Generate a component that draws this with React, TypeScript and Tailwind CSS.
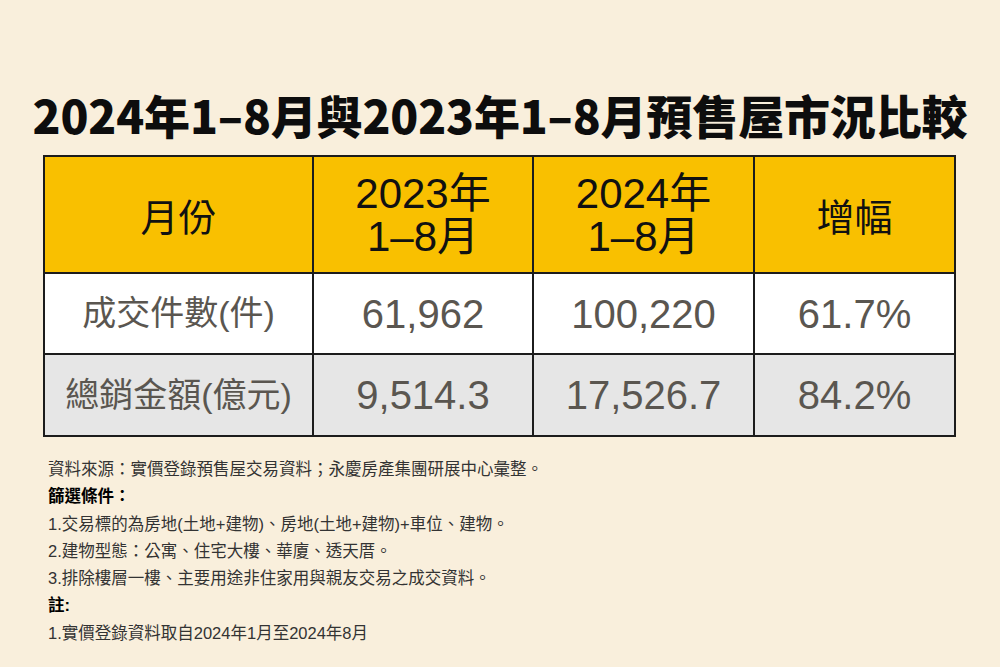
import React from "react";

const cjk = { fontFamily: '"Liberation Sans", "Noto Sans CJK TC", sans-serif' };
const cjkOnly = { fontFamily: '"Noto Sans CJK TC", sans-serif' };

function Cell({ children, className = "" }: { children: React.ReactNode; className?: string }) {
  return (
    <div className={`flex items-center justify-center border-r-2 border-b-2 border-[#1c1c1c] text-center ${className}`}>
      {children}
    </div>
  );
}

export default function App() {
  return (
    <div className="w-[1000px] h-[667px] bg-[#f9efdc] flex flex-col items-center overflow-hidden" style={cjk}>
      <h1
        className="mt-[91px] h-[46px] leading-[46px] text-[46px] font-black text-[#0d0d0d] whitespace-nowrap tracking-[-0.15px]"
        style={cjkOnly}
      >
        2024年1–8月與2023年1–8月預售屋市況比較
      </h1>
      <div className="mt-[18px] grid grid-cols-[269px_220px_221px_201px] border-l-2 border-t-2 border-[#1c1c1c] ml-[-1px]">
        <Cell className="h-[117px] bg-[#f9c000] text-[#111] text-[38px]">
          <span style={cjkOnly}>月份</span>
        </Cell>
        <Cell className="h-[117px] bg-[#f9c000] text-[#111] text-[42px] leading-[43px]">
          <span>2023年<br />1–8月</span>
        </Cell>
        <Cell className="h-[117px] bg-[#f9c000] text-[#111] text-[42px] leading-[43px]">
          <span>2024年<br />1–8月</span>
        </Cell>
        <Cell className="h-[117px] bg-[#f9c000] text-[#111] text-[38px]">
          <span style={cjkOnly}>增幅</span>
        </Cell>

        <Cell className="h-[81px] bg-white text-[#5a5650] text-[34px]">成交件數(件)</Cell>
        <Cell className="h-[81px] bg-white text-[#5a5650] text-[40px]">61,962</Cell>
        <Cell className="h-[81px] bg-white text-[#5a5650] text-[40px]">100,220</Cell>
        <Cell className="h-[81px] bg-white text-[#5a5650] text-[40px]">61.7%</Cell>

        <Cell className="h-[82px] bg-[#e6e6e6] text-[#5a5650] text-[34px]">總銷金額(億元)</Cell>
        <Cell className="h-[82px] bg-[#e6e6e6] text-[#5a5650] text-[40px]">9,514.3</Cell>
        <Cell className="h-[82px] bg-[#e6e6e6] text-[#5a5650] text-[40px]">17,526.7</Cell>
        <Cell className="h-[82px] bg-[#e6e6e6] text-[#5a5650] text-[40px]">84.2%</Cell>
      </div>
      <div className="self-start ml-[48px] mt-[19px] text-[16.5px] leading-[27.3px] text-[#333]">
        <p>資料來源：實價登錄預售屋交易資料；永慶房產集團研展中心彙整。</p>
        <p className="font-bold text-black">篩選條件：</p>
        <p>1.交易標的為房地(土地+建物)、房地(土地+建物)+車位、建物。</p>
        <p>2.建物型態：公寓、住宅大樓、華廈、透天厝。</p>
        <p>3.排除樓層一樓、主要用途非住家用與親友交易之成交資料。</p>
        <p className="font-bold text-black">註:</p>
        <p>1.實價登錄資料取自2024年1月至2024年8月</p>
      </div>
    </div>
  );
}
